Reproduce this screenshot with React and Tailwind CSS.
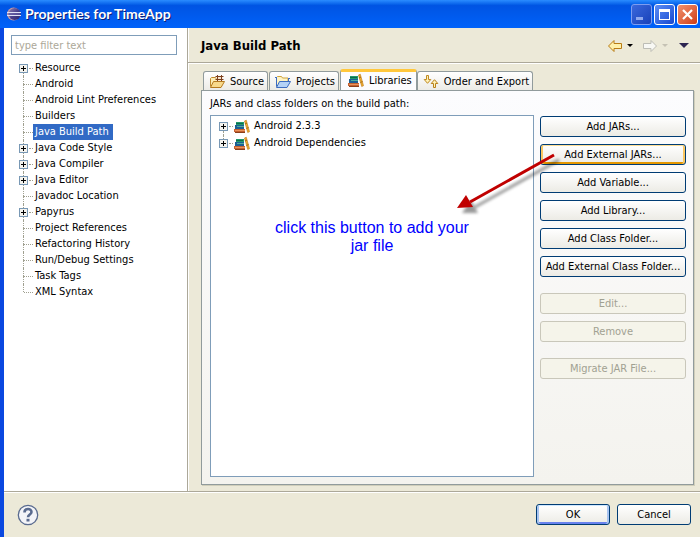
import { useState } from "react";

const PAGES = [
  { name: "Resource", children: true },
  { name: "Android" },
  { name: "Android Lint Preferences" },
  { name: "Builders" },
  { name: "Java Build Path" },
  { name: "Java Code Style", children: true },
  { name: "Java Compiler", children: true },
  { name: "Java Editor", children: true },
  { name: "Javadoc Location" },
  { name: "Papyrus", children: true },
  { name: "Project References" },
  { name: "Refactoring History" },
  { name: "Run/Debug Settings" },
  { name: "Task Tags" },
  { name: "XML Syntax" },
];

const LIBRARIES = ["Android 2.3.3", "Android Dependencies"];

const TABS = [
  { name: "Source", Icon: SourceIcon },
  { name: "Projects", Icon: ProjectsIcon },
  { name: "Libraries", Icon: BooksIcon },
  { name: "Order and Export", Icon: OrderIcon },
];

function EclipseIcon() {
  return (
    <svg width="16" height="16" viewBox="0 0 16 16" aria-hidden="true">
      <defs>
        <linearGradient id="eclipse" x1="0" y1="0" x2="1" y2="1">
          <stop offset="0" stopColor="#8d7fb0" />
          <stop offset="0.5" stopColor="#4a3f8c" />
          <stop offset="1" stopColor="#2b2468" />
        </linearGradient>
      </defs>
      <circle cx="7.500" cy="8" r="6.500" fill="#c39aa6" />
      <circle cx="8.700" cy="8" r="6" fill="url(#eclipse)" />
      <path d="M1 6.500h14M1 9.500h14" stroke="#dfe0f5" />
      <path d="M2 8h12" stroke="#6f68ad" />
    </svg>
  );
}

function SourceIcon() {
  return (
    <svg width="16" height="16" viewBox="0 0 16 16" aria-hidden="true">
      <path d="M1.500 12.500v-8l1-1h4l1 1.500h4.500v3" fill="#fdeeb5" stroke="#c08a2c" />
      <path d="M7.500 2.500h6v5h-6z" fill="#f6e3cf" />
      <path d="M8.500 1v7M12.500 1v7M6.500 2.500h8M6.500 5.500h8" fill="none" stroke="#7b3f1d" />
      <path d="m1.500 13.500 3-6h11l-3.500 6z" fill="#f8d98a" stroke="#b57a1e" />
    </svg>
  );
}

function ProjectsIcon() {
  return (
    <svg width="16" height="16" viewBox="0 0 16 16" aria-hidden="true">
      <path d="M1.500 12.500v-9l1-1h4l1 1.500h5.500v4" fill="#fff4c4" stroke="#d0a43c" />
      <path d="M1.500 4v8.500M13.500 4v3.500M0 3.500h2M13 4.500h2" stroke="#3d6cc0" />
      <path d="m1.500 13.500 3-6h11l-3.500 6z" fill="#b4d2f6" stroke="#3d6cc0" />
    </svg>
  );
}

function BooksIcon() {
  return (
    <svg width="16" height="16" viewBox="0 0 16 16" shapeRendering="crispEdges" aria-hidden="true">
      <path d="M2 3h8v3H2z" fill="#1f9a6c" />
      <path d="M2 4h7v1H2z" fill="#0c6b4c" />
      <path d="M1 6h9v4H1z" fill="#1c5f94" />
      <path d="M3 7h7v1H3z" fill="#4fae9a" />
      <path d="M0 10h11v3H0z" fill="#c4602f" />
      <path d="M1 11h10v1H1z" fill="#e9935c" />
      <path d="M1 13h10v1H1z" fill="#8a3f1c" />
      <path d="m10.500 2 1.800-.8 3.200 11.500-1.800.8z" fill="#f0ae30" stroke="#b87312" strokeWidth="0.600" shapeRendering="auto" />
      <path d="m11 5 2-1M12.500 9.500l2-1" stroke="#a66a10" shapeRendering="auto" />
    </svg>
  );
}

function OrderIcon() {
  return (
    <svg width="16" height="16" viewBox="0 0 16 16" aria-hidden="true">
      <path d="M3.500 1.500h2v4h2.300L4.500 9.300 1.200 5.500h2.300z" fill="#fff2b8" stroke="#c08a20" />
      <path d="M10.500 13.500h2v-4h2.300L11.500 5.700 8.200 9.500h2.300z" fill="#fff2b8" stroke="#b8801a" />
    </svg>
  );
}

function ArrowIcon({ forward }) {
  return (
    <svg width="16" height="14" viewBox="0 0 16 14" aria-hidden="true">
      {forward ? (
        <path d="M14.500 7 9 1.500v3H1.500v5H9v3z" fill="#f8f8f4" stroke="#bdbdb5" />
      ) : (
        <path d="M1.500 7 7 1.500v3h7.500v5H7v3z" fill="#fff0a8" stroke="#b87c14" />
      )}
    </svg>
  );
}

function Caret({ className }) {
  return (
    <svg width="6" height="3" viewBox="0 0 6 3" className={className} aria-hidden="true">
      <path d="M0 0h6L3 3z" fill="currentColor" />
    </svg>
  );
}

// Dotted guide lines plus the optional +/- box of one tree row
function TreeGutter({ expandable, first, last }) {
  return (
    <span className="flex shrink-0 items-center self-stretch">
      <span className="flex w-[9px] flex-col items-center self-stretch">
        <span className={`w-px flex-1 border-l border-dotted ${first ? "border-transparent" : "border-[#a0a090]"}`} />
        {expandable && (
          <svg width="9" height="9" viewBox="0 0 9 9" shapeRendering="crispEdges" className="shrink-0">
            <path d="M0 0h9v9H0z" fill="#7898b5" />
            <path d="M1 1h7v7H1z" fill="#f4f3ee" />
            <path d="M2 4h5v1H2zM4 2h1v5H4z" fill="#000" />
          </svg>
        )}
        <span className={`w-px flex-1 border-l border-dotted ${last ? "border-transparent" : "border-[#a0a090]"}`} />
      </span>
      <span className={`h-px border-t border-dotted border-[#a0a090] ${expandable ? "ml-px w-1" : "-ml-1 w-[9px]"}`} />
    </span>
  );
}

function PushButton({ children, disabled, hot, primary, className = "" }) {
  let look = "border-[#003c74] bg-linear-to-b from-white to-[#ecebe5] text-black";
  if (disabled) look = "border-[#c9c7ba] bg-[#f5f4ea] text-[#a1a192]";
  if (hot) look += " shadow-[inset_0_1px_#fddc93,inset_2px_0_#fbc761,inset_-2px_0_#fbc761,inset_0_-2px_#e59700]";
  if (primary) look += " shadow-[inset_0_1px_#cee7ff,inset_2px_0_#a8c4f0,inset_-2px_0_#a8c4f0,inset_0_-2px_#6982ee]";
  return (
    <button
      type="button"
      disabled={disabled}
      className={`h-[21px] rounded-[3px] border pt-px text-center leading-4 whitespace-nowrap ${look} ${className}`}
    >
      {children}
    </button>
  );
}

function TitleBar() {
  const box = "flex size-[21px] items-center justify-center rounded-[3px] border";
  return (
    <header className="flex h-7 items-center bg-linear-to-b from-[#2a8cff] via-[#0054e3] via-20% to-[#0062fa] pr-0.5 pl-1.5">
      <EclipseIcon />
      <h1 className="ml-[3px] flex-1 font-['Lato',sans-serif] text-[14px] leading-5 font-bold text-white [text-shadow:1px_1px_#0a1f7a]">
        Properties for TimeApp
      </h1>
      <div className="flex gap-0.5">
        <button type="button" aria-label="Minimize" className={`${box} border-[#7d9df0] bg-linear-to-br from-[#3a68dd] to-[#1941b8]`}>
          <svg width="15" height="15" viewBox="0 0 15 15">
            <path d="M2 10h7v3H2z" fill="#8fa9ee" />
          </svg>
        </button>
        <button type="button" aria-label="Maximize" className={`${box} border-white bg-linear-to-br from-[#5d8df5] to-[#1747cf]`}>
          <svg width="15" height="15" viewBox="0 0 15 15" shapeRendering="crispEdges">
            <path d="M2 2h11v11H2zM3 5v7h9V5z" fill="#fff" fillRule="evenodd" />
          </svg>
        </button>
        <button type="button" aria-label="Close" className={`${box} border-white bg-linear-to-br from-[#f0906c] to-[#cf3a10]`}>
          <svg width="15" height="15" viewBox="0 0 15 15">
            <path d="m3 3 9 9M12 3l-9 9" stroke="#fff" strokeWidth="2.200" />
          </svg>
        </button>
      </div>
    </header>
  );
}

function Sidebar({ page, onSelect }) {
  return (
    <aside className="w-[183px] shrink-0 bg-white pt-[7px] pl-[7px]">
      <input
        type="text"
        aria-label="Filter pages"
        placeholder="type filter text"
        className="block h-5 w-[166px] border border-[#7f9db9] px-[3px] text-[11px] leading-4 outline-none placeholder:text-[#aca899]"
      />
      <ul className="mt-[5px] pl-2">
        {PAGES.map((item, i) => (
          <li key={item.name} className="flex h-4 items-center">
            <TreeGutter expandable={item.children} first={i === 0} last={i === PAGES.length - 1} />
            <button
              type="button"
              onClick={() => onSelect(item.name)}
              className={`h-4 pr-1 pl-0.5 leading-4 whitespace-nowrap ${page === item.name ? "bg-[#316ac5] text-white" : ""}`}
            >
              {item.name}
            </button>
          </li>
        ))}
      </ul>
    </aside>
  );
}

function PageHeader({ title }) {
  return (
    <div className="flex h-[35px] items-center border-b border-[#aca899] pr-[11px] pl-[13px] shadow-[0_1px_#fff]">
      <h2 className="flex-1 pt-0.5 text-[13px] leading-5 font-bold">{title}</h2>
      <div className="flex items-center pt-px">
        <button type="button" aria-label="Back"><ArrowIcon /></button>
        <button type="button" aria-label="Back history" className="ml-1 py-1"><Caret className="text-black" /></button>
        <button type="button" aria-label="Forward" disabled className="ml-[9px]"><ArrowIcon forward /></button>
        <button type="button" aria-label="Forward history" disabled className="ml-1 py-1"><Caret className="text-[#c5c2b4]" /></button>
        <button type="button" aria-label="Menu" className="ml-[11px]">
          <svg width="10" height="5" viewBox="0 0 10 5" aria-hidden="true">
            <path d="M0 0h10L5 5z" fill="#2c2450" />
          </svg>
        </button>
      </div>
    </div>
  );
}

function TabBar({ tab, onSelect }) {
  return (
    <div role="tablist" className="flex items-end pl-0.5">
      {TABS.map(({ name, Icon }) => {
        const active = tab === name;
        return (
          <button
            key={name}
            type="button"
            role="tab"
            aria-selected={active}
            onClick={() => onSelect(name)}
            className={
              active
                ? "-mb-px flex h-[22px] items-center gap-[5px] rounded-t-[3px] border border-t-[3px] border-[#919b9c] border-t-[#ffc73c] border-b-[#fcfcfe] bg-[#fcfcfe] pr-1 pb-px pl-[7px] leading-4"
                : "mr-px flex h-[19px] items-center gap-[5px] rounded-t-[3px] border border-b-0 border-[#919b9c] bg-linear-to-b from-white to-[#ecebe6] pt-px pr-[3px] pl-[5px] leading-4"
            }
          >
            <Icon />
            {name}
          </button>
        );
      })}
    </div>
  );
}

function CalloutArrow() {
  return (
    <svg
      width="110"
      height="70"
      viewBox="0 0 110 70"
      className="pointer-events-none absolute top-[33px] right-[121px]"
      aria-hidden="true"
    >
      <defs>
        <filter id="soft" x="-20%" y="-20%" width="140%" height="140%">
          <feGaussianBlur stdDeviation="1.500" />
        </filter>
      </defs>
      <g transform="translate(5 5)" filter="url(#soft)" opacity="0.400">
        <path d="M99 7 15 54" stroke="#000" strokeWidth="3" />
        <path d="m2 60 9-13 7 13z" fill="#000" />
      </g>
      <path d="M99 7 15 54" stroke="#c00000" strokeWidth="3" />
      <path d="m2 60 9-13 7 12z" fill="#c00000" />
    </svg>
  );
}

function LibrariesPanel() {
  return (
    <div className="flex flex-1 flex-col border border-[#919b9c] bg-linear-to-b from-[#fcfcfe] to-[#f4f3ee] pt-[5px] pr-[7px] pb-[7px] pl-2 shadow-[1px_1px_#d0ceba]">
      <p className="pb-[3px] leading-4">JARs and class folders on the build path:</p>
      <div className="relative flex flex-1 gap-1.5">
        <div className="flex-1 border border-[#7f9db9] bg-white pt-0.5 pl-2">
          <ul>
            {LIBRARIES.map((name, i) => (
              <li key={name} className="flex h-[17px] items-center">
                <TreeGutter expandable first={i === 0} last={i === LIBRARIES.length - 1} />
                <span className="mr-1 ml-px"><BooksIcon /></span>
                {name}
              </li>
            ))}
          </ul>
          <p className="mx-auto mt-[67px] w-[206px] pr-2 text-center font-['Liberation_Sans',Arial,sans-serif] text-[16px] leading-[18px] text-[#0000ff]">
            click this button to add your jar file
          </p>
        </div>
        <div className="flex w-[146px] flex-col gap-[7px] pt-px">
          <PushButton>Add JARs...</PushButton>
          <PushButton hot>Add External JARs...</PushButton>
          <PushButton>Add Variable...</PushButton>
          <PushButton>Add Library...</PushButton>
          <PushButton>Add Class Folder...</PushButton>
          <PushButton>Add External Class Folder...</PushButton>
          <PushButton disabled className="mt-[9px]">Edit...</PushButton>
          <PushButton disabled>Remove</PushButton>
          <PushButton disabled className="mt-[9px]">Migrate JAR File...</PushButton>
        </div>
        <CalloutArrow />
      </div>
    </div>
  );
}

function Footer() {
  return (
    <footer className="flex h-[46px] items-center gap-[7px] border-t border-[#aca899] pr-[9px] pl-[13px] shadow-[inset_0_1px_#fff]">
      <button type="button" aria-label="Help" className="mr-auto">
        <svg width="22" height="22" viewBox="0 0 22 22">
          <circle cx="11" cy="11" r="9.700" fill="#f3f4f8" stroke="#5a6b8f" strokeWidth="1.300" />
          <path d="M7.500 8.500C7.500 4 14.500 4 14.500 8c0 2.500-3.500 2.500-3.500 5.200" fill="none" stroke="#5a6b8f" strokeWidth="2.600" />
          <path d="M9.500 14.800h3v2.700h-3z" fill="#5a6b8f" />
        </svg>
      </button>
      <PushButton primary className="w-[74px]">OK</PushButton>
      <PushButton className="w-[74px]">Cancel</PushButton>
    </footer>
  );
}

export default function App() {
  const [page, setPage] = useState("Java Build Path");
  const [tab, setTab] = useState("Libraries");

  return (
    <div className="flex min-h-screen flex-col bg-[#ece9d8] font-['DejaVu_Sans_Condensed','DejaVu_Sans',sans-serif] text-[11px] text-black">
      <TitleBar />
      <div className="flex flex-1 flex-col border-l-4 border-[#0a48e0]">
        <div className="flex flex-1">
          <Sidebar page={page} onSelect={setPage} />
          <main className="flex min-w-0 flex-1 flex-col border-l border-[#aca899] shadow-[inset_1px_0_#fff]">
            <PageHeader title={page} />
            <div className="flex flex-1 flex-col pt-1.5 pr-1.5 pb-1.5 pl-[13px]">
              <TabBar tab={tab} onSelect={setTab} />
              <LibrariesPanel />
            </div>
          </main>
        </div>
        <Footer />
      </div>
    </div>
  );
}
